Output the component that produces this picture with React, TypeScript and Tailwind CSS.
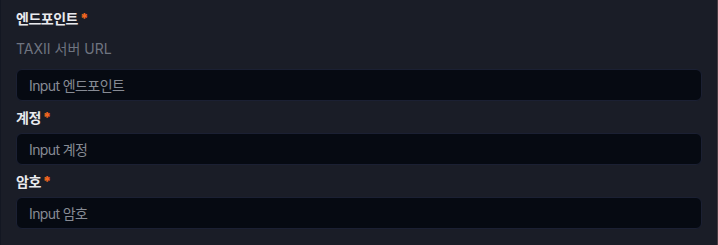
import React from 'react';

interface FieldProps {
    label: string;
    description?: string;
    placeholder: string;
    type?: string;
}

const Field: React.FC<FieldProps> = ({ label, description, placeholder, type = 'text' }) => {
    return (
        <div className="flex flex-col">
            <label className="flex h-5 items-center text-[14px] leading-5 font-bold tracking-[-0.5px] text-[#e9eaee]">
                {label}
                <span className="ml-[2px] text-[14px] font-black text-[#f0651f]">*</span>
            </label>
            {description ? (
                <p className="mt-[10px] h-5 text-[14px] leading-5 text-[#6f7480]">{description}</p>
            ) : null}
            <input
                type={type}
                placeholder={placeholder}
                className={`${description ? 'mt-[10px]' : 'mt-[5px]'} h-8 w-full rounded-[6px] border border-[#1b2033] bg-[#060a12] px-3 text-[14px] tracking-[-0.6px] text-[#d1d5db] placeholder:text-[#878b94] focus:outline-none`}
            />
        </div>
    );
};

const App: React.FC = () => {
    return (
        <div
            className="h-[245px] w-[718px] border-l border-l-[#131722] border-r border-r-[#4a3d44] bg-[#1a1d27] px-[15px] pt-[9px]"
            style={{ fontFamily: 'Inter, "Noto Sans CJK KR", sans-serif' }}
        >
            <div className="flex flex-col gap-[7px]">
                <Field label="엔드포인트" description="TAXII 서버 URL" placeholder="Input 엔드포인트" />
                <Field label="계정" placeholder="Input 계정" />
                <Field label="암호" placeholder="Input 암호" type="password" />
            </div>
        </div>
    );
};

export default App;
